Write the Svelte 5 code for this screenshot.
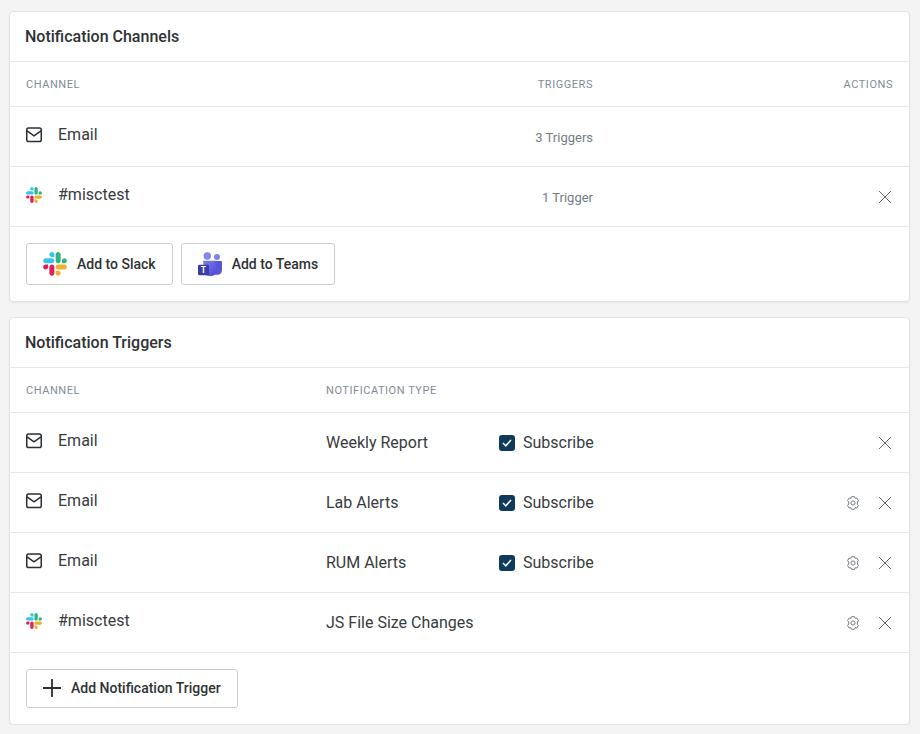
<script>
  const triggers = [
    { icon: 'mail', name: 'Email', type: 'Weekly Report', sub: true, gear: false },
    { icon: 'mail', name: 'Email', type: 'Lab Alerts', sub: true, gear: true },
    { icon: 'mail', name: 'Email', type: 'RUM Alerts', sub: true, gear: true },
    { icon: 'slack', name: '#misctest', type: 'JS File Size Changes', sub: false, gear: true }
  ];
</script>

{#snippet slack(size)}
  <svg class="ic" width={size} height={size} viewBox="0 0 127 127" aria-hidden="true">
    <path fill="#E01E5A" d="M27.2 80c0 7.3-5.9 13.2-13.2 13.2C6.7 93.2.8 87.3.8 80c0-7.3 5.9-13.2 13.2-13.2h13.2V80zm6.6 0c0-7.3 5.9-13.2 13.2-13.2 7.3 0 13.2 5.9 13.2 13.2v33c0 7.3-5.9 13.2-13.2 13.2-7.3 0-13.2-5.9-13.2-13.2V80z"/>
    <path fill="#36C5F0" d="M47 27c-7.3 0-13.2-5.9-13.2-13.2C33.8 6.5 39.7.6 47 .6c7.3 0 13.2 5.9 13.2 13.2V27H47zm0 6.7c7.3 0 13.2 5.9 13.2 13.2 0 7.3-5.9 13.2-13.2 13.2H13.9C6.6 60.1.7 54.2.7 46.9c0-7.3 5.9-13.2 13.2-13.2H47z"/>
    <path fill="#2EB67D" d="M99.9 46.9c0-7.3 5.9-13.2 13.2-13.2 7.3 0 13.2 5.9 13.2 13.2 0 7.3-5.9 13.2-13.2 13.2H99.9V46.9zm-6.6 0c0 7.3-5.9 13.2-13.2 13.2-7.3 0-13.2-5.9-13.2-13.2V13.8C66.9 6.5 72.8.6 80.1.6c7.3 0 13.2 5.9 13.2 13.2v33.1z"/>
    <path fill="#ECB22E" d="M80.1 99.8c7.3 0 13.2 5.9 13.2 13.2 0 7.3-5.9 13.2-13.2 13.2-7.3 0-13.2-5.9-13.2-13.2V99.8h13.2zm0-6.6c-7.3 0-13.2-5.9-13.2-13.2 0-7.3 5.9-13.2 13.2-13.2h33.1c7.3 0 13.2 5.9 13.2 13.2 0 7.3-5.9 13.2-13.2 13.2H80.1z"/>
  </svg>
{/snippet}

{#snippet mail()}
  <svg class="ic" width="16" height="16" viewBox="0 0 16 16" fill="none" stroke="#2b2f33" stroke-width="1.5" aria-hidden="true">
    <rect x="0.75" y="1" width="14.5" height="13.5" rx="1.8"/>
    <path d="M1 3.800l7 5 7-5"/>
  </svg>
{/snippet}

{#snippet close()}
  <svg class="ic" width="14" height="14" viewBox="0 0 14 14" stroke="#5f666d" stroke-width="1" aria-hidden="true">
    <path d="M1 1l12 12M13 1L1 13"/>
  </svg>
{/snippet}

{#snippet gear()}
  <svg class="ic" width="14" height="14" viewBox="0 0 14 14" fill="none" stroke="#777d83" stroke-width="1" aria-hidden="true">
    <path d="M5.500.7h3l.6 1.600 1.800-.3 1.500 2.600-1.100 1.400v2l1.100 1.400-1.500 2.600-1.800-.3-.6 1.600h-3l-.6-1.600-1.800.3-1.500-2.600L2.700 8V6L1.600 4.600 3.100 2l1.800.3z" stroke-linejoin="round"/>
    <circle cx="7" cy="7" r="2.100"/>
  </svg>
{/snippet}

{#snippet channel(icon, name)}
  <div class="channel">
    {#if icon === 'mail'}{@render mail()}{:else}{@render slack(16)}{/if}
    <span>{name}</span>
  </div>
{/snippet}

<main class="page">
  <section class="card">
    <h2>Notification Channels</h2>
    <div class="row head cols-a">
      <div>Channel</div>
      <div class="right">Triggers</div>
      <div class="right">Actions</div>
    </div>
    <div class="row cols-a">
      {@render channel('mail', 'Email')}
      <div class="right small">3 Triggers</div>
      <div></div>
    </div>
    <div class="row cols-a">
      {@render channel('slack', '#misctest')}
      <div class="right small">1 Trigger</div>
      <div class="actions">{@render close()}</div>
    </div>
    <div class="foot">
      <button class="btn">{@render slack(24)}<span>Add to Slack</span></button>
      <button class="btn teams">
        <svg class="ic" width="24" height="24" viewBox="0 0 24 24" aria-hidden="true">
          <defs>
            <linearGradient id="teamsBody" x1="0" y1="0" x2="1" y2="1">
              <stop offset="0" stop-color="#7b83eb"/>
              <stop offset="1" stop-color="#4f46d8"/>
            </linearGradient>
          </defs>
          <circle cx="19" cy="5" r="3" fill="#7b83eb"/>
          <path d="M16 9h6.800c.7 0 1.200.5 1.200 1.200V18c0 2.800-2 4.800-4.500 4.800H16z" fill="#5a55d6"/>
          <circle cx="9.300" cy="4" r="3.700" fill="#8288f0"/>
          <path d="M5 8.800h11.700c.8 0 1.300.5 1.300 1.300V19c0 3-2.300 5-5 5h-1.500c-2.800 0-4.800-1.500-5.500-4z" fill="url(#teamsBody)"/>
          <rect x="0" y="12.800" width="11" height="10.400" rx="1.200" fill="#3a3da6"/>
          <text x="5.500" y="21" text-anchor="middle" font-family="Roboto, sans-serif" font-size="8.500" font-weight="700" fill="#fff">T</text>
        </svg>
        <span>Add to Teams</span>
      </button>
    </div>
  </section>

  <section class="card">
    <h2>Notification Triggers</h2>
    <div class="row head cols-b">
      <div>Channel</div>
      <div>Notification Type</div>
      <div></div>
      <div></div>
    </div>
    {#each triggers as t}
      <div class="row cols-b">
        {@render channel(t.icon, t.name)}
        <div class="type">{t.type}</div>
        <div>
          {#if t.sub}
            <label class="check">
              <span class="box">
                <svg width="10" height="8" viewBox="0 0 10 8" fill="none" stroke="#fff" stroke-width="1.5" aria-hidden="true"><path d="M1 4l2.800 2.800L9 1"/></svg>
              </span>
              Subscribe
            </label>
          {/if}
        </div>
        <div class="actions">
          {#if t.gear}{@render gear()}{/if}
          {@render close()}
        </div>
      </div>
    {/each}
    <div class="foot">
      <button class="btn add">
        <svg class="ic" width="18" height="18" viewBox="0 0 18 18" stroke="#2b2f33" stroke-width="1.800" aria-hidden="true"><path d="M9 0v18M0 9h18"/></svg>
        <span>Add Notification Trigger</span>
      </button>
    </div>
  </section>
</main>

<style>
  :global(body) {
    margin: 0;
    background: #f4f4f4;
  }
  .page {
    display: flex;
    flex-direction: column;
    gap: 15px;
    padding: 11px 10px 0 9px;
    font-family: Roboto, "Liberation Sans", sans-serif;
    color: #383b3e;
  }
  .card {
    background: #fff;
    border: 1px solid #e2e2e2;
    border-radius: 4px;
    box-shadow: 0 1px 2px rgba(0, 0, 0, 0.06);
  }
  h2 {
    margin: 0;
    height: 50px;
    box-sizing: border-box;
    padding: 15px 15px 0;
    font-size: 16px;
    line-height: 19px;
    font-weight: 500;
    color: #2e3235;
    border-bottom: 1px solid #e8e8e8;
  }
  .row {
    display: grid;
    align-items: center;
    height: 60px;
    box-sizing: border-box;
    padding: 0 16px;
    border-bottom: 1px solid #e8e8e8;
    font-size: 16px;
  }
  .head {
    height: 45px;
    font-size: 11px;
    letter-spacing: 0.55px;
    text-transform: uppercase;
    color: #7f8b97;
  }
  .cols-a {
    grid-template-columns: 1fr 150px 300px;
  }
  .cols-b {
    grid-template-columns: 300px 173px 1fr 60px;
  }
  .right {
    text-align: right;
  }
  .small {
    font-size: 13px;
    color: #737c84;
    padding-top: 2px;
  }
  .channel {
    display: flex;
    align-items: center;
    gap: 16px;
    padding-bottom: 4px;
  }
  .ic {
    display: block;
    flex: none;
  }
  .actions {
    display: flex;
    justify-content: flex-end;
    align-items: center;
    gap: 18px;
    padding-right: 1px;
  }
  .check {
    display: flex;
    align-items: center;
    gap: 8px;
  }
  .box {
    width: 16px;
    height: 16px;
    border-radius: 3px;
    background: #0f3a5c;
    display: flex;
    align-items: center;
    justify-content: center;
  }
  .foot {
    display: flex;
    gap: 8px;
    padding: 16px 16px;
  }
  .btn {
    display: flex;
    align-items: center;
    gap: 10px;
    height: 42px;
    padding: 0 16px;
    background: #fff;
    border: 1px solid #c9ced3;
    border-radius: 3px;
    font: 500 14px Roboto, sans-serif;
    color: #2e3235;
  }
  .add {
    height: 39px;
    gap: 10px;
    padding-bottom: 1px;
  }
</style>
